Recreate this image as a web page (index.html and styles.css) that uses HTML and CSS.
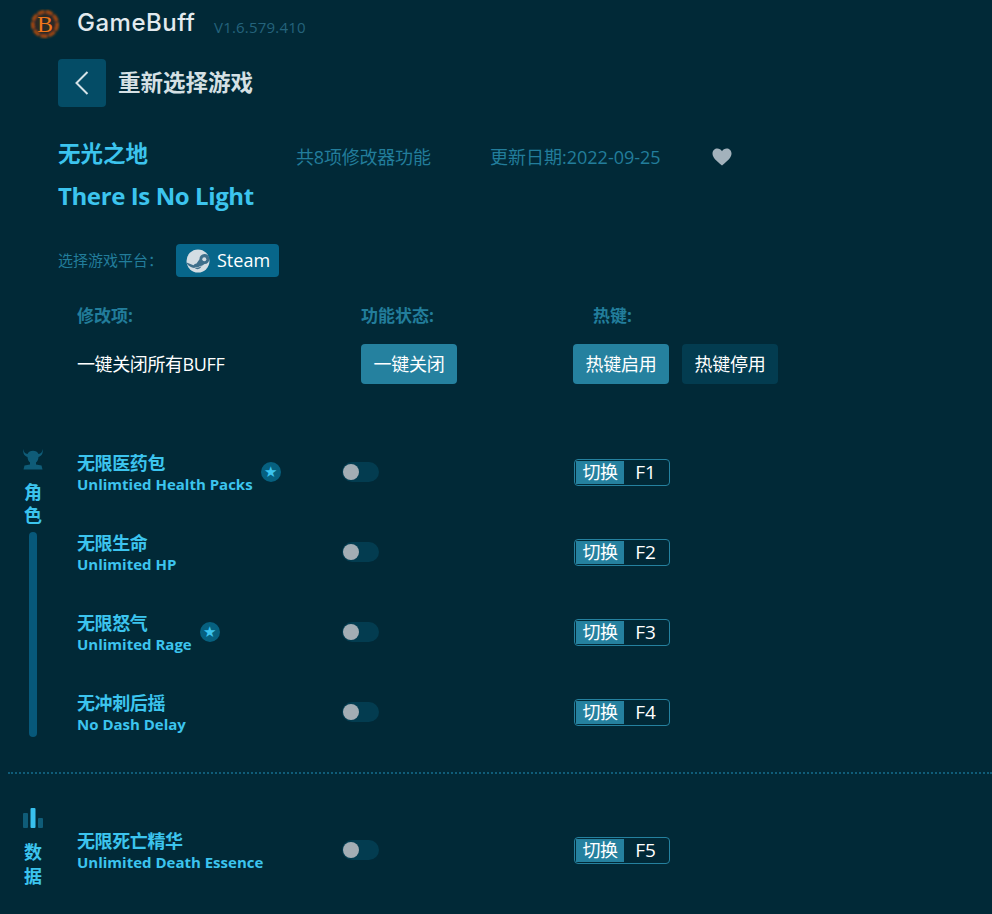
FILE: index.html
```html
<!DOCTYPE html>
<html lang="en">
<head>
    <meta charset="UTF-8">
    <meta name="viewport" content="width=device-width, initial-scale=1.0">
    <title>GameBuff</title>
    <link rel="stylesheet" href="styles.css">
</head>
<body>
    <div class="topbar">
        <svg class="logo" width="30" height="30" viewBox="0 0 30 30">
            <defs><filter id="glow"><feGaussianBlur stdDeviation="0.9"/></filter></defs>
            <circle cx="15" cy="15" r="12.500" fill="#2a2b28" stroke="#a84a10" stroke-width="3" stroke-dasharray="7 1.500" filter="url(#glow)"/>
            <text x="15" y="23" text-anchor="middle" class="logo-letter">B</text>
        </svg>
        <span class="brand">GameBuff</span>
        <span class="version">V1.6.579.410</span>
    </div>

    <div class="back-row">
        <div class="back-btn">
            <svg width="16" height="26" viewBox="0 0 16 26"><path d="M13.5 2 L2.5 13 L13.5 24" fill="none" stroke="#d5e3e8" stroke-width="2"/></svg>
        </div>
        <span class="back-title">重新选择游戏</span>
    </div>

    <div class="game-info">
        <div class="game-head">
            <h1 class="game-cn">无光之地</h1>
            <span class="game-count">共8项修改器功能</span>
            <span class="game-date">更新日期:2022-09-25</span>
            <svg class="heart" width="20" height="18" viewBox="0 0 20 18"><path d="M10 17.5 C4 12.5 .5 9.5 .5 5.5 C.5 2.5 2.8 .5 5.3 .5 C7.2 .5 9 1.5 10 3.2 C11 1.5 12.8 .5 14.7 .5 C17.2 .5 19.5 2.5 19.5 5.5 C19.5 9.5 16 12.5 10 17.5 Z" fill="#a3b2bc"/></svg>
        </div>
        <h2 class="game-en">There Is No Light</h2>
    </div>

    <div class="platform">
        <span class="platform-label">选择游戏平台：</span>
        <div class="steam-btn">
            <svg width="24" height="24" viewBox="0 0 24 24">
                <circle cx="12" cy="12" r="11.5" fill="#d3dde3"/>
                <path d="M1 15 L8 18 A4 4 0 0 0 15.5 16.5 A11.5 11.5 0 0 1 1 15 Z M.6 13.5 L7.5 16.3 A4.2 4.2 0 0 1 10.5 14.4 L13.5 10.2 A5 5 0 1 1 18.6 15 L14 17.9 A11.5 11.5 0 0 1 1 15 Z" fill="#3f6f8b"/>
                <circle cx="18.3" cy="10.2" r="3.6" fill="#3f6f8b"/>
                <circle cx="18.3" cy="10.2" r="2" fill="#d3dde3"/>
            </svg>
            <span>Steam</span>
        </div>
    </div>

    <div class="grid-row heading-row">
        <span>修改项:</span>
        <span class="heading-status">功能状态:</span>
        <span class="heading-hotkey">热键:</span>
    </div>

    <div class="grid-row master-row">
        <span class="master-label">一键关闭所有BUFF</span>
        <div class="heading-status"><button class="btn btn-on">一键关闭</button></div>
        <div class="master-hotkeys">
            <button class="btn btn-on">热键启用</button>
            <button class="btn btn-off">热键停用</button>
        </div>
    </div>

    <section class="group group-role">
        <div class="side">
            <svg width="22" height="22" viewBox="0 0 22 22"><path d="M1.500 0 C1.500 3 3 4.500 5.500 5 C6.500 2.800 8.500 1.800 11 1.800 C13.500 1.800 15.500 2.800 16.500 5 C19 4.500 20.500 3 20.500 0 C21.500 3.500 20 7 16.500 8 C16.300 10.500 15.500 12.500 14 13.500 L14 15.500 L19.500 16.500 L20.500 20.500 L1.500 20.500 L2.500 16.500 L8 15.500 L8 13.500 C6.500 12.500 5.700 10.500 5.500 8 C2 7 .5 3.500 1.500 0 Z" fill="#0f5c78"/></svg>
            <div class="side-text">角<br>色</div>
            <div class="side-bar"></div>
        </div>
        <div class="rows">
            <div class="grid-row cheat">
                <div class="cheat-name">
                    <div>
                        <div class="name-cn">无限医药包</div>
                        <div class="name-en">Unlimtied Health Packs</div>
                    </div>
                    <span class="star">★</span>
                </div>
                <div class="toggle"><i></i></div>
                <div class="hotkey"><span class="hotkey-tag">切换</span><span class="hotkey-key">F1</span></div>
            </div>
            <div class="grid-row cheat">
                <div class="cheat-name">
                    <div>
                        <div class="name-cn">无限生命</div>
                        <div class="name-en">Unlimited HP</div>
                    </div>
                </div>
                <div class="toggle"><i></i></div>
                <div class="hotkey"><span class="hotkey-tag">切换</span><span class="hotkey-key">F2</span></div>
            </div>
            <div class="grid-row cheat">
                <div class="cheat-name">
                    <div>
                        <div class="name-cn">无限怒气</div>
                        <div class="name-en">Unlimited Rage</div>
                    </div>
                    <span class="star">★</span>
                </div>
                <div class="toggle"><i></i></div>
                <div class="hotkey"><span class="hotkey-tag">切换</span><span class="hotkey-key">F3</span></div>
            </div>
            <div class="grid-row cheat">
                <div class="cheat-name">
                    <div>
                        <div class="name-cn">无冲刺后摇</div>
                        <div class="name-en">No Dash Delay</div>
                    </div>
                </div>
                <div class="toggle"><i></i></div>
                <div class="hotkey"><span class="hotkey-tag">切换</span><span class="hotkey-key">F4</span></div>
            </div>
        </div>
    </section>

    <div class="divider"></div>

    <section class="group group-data">
        <div class="side">
            <svg width="22" height="22" viewBox="0 0 22 22">
                <rect x="1" y="6" width="5" height="15" rx="1" fill="#0f5c78"/>
                <rect x="8.500" y="1" width="5" height="20" rx="1" fill="#38c0ee"/>
                <rect x="16" y="11" width="5" height="10" rx="1" fill="#0f5c78"/>
            </svg>
            <div class="side-text">数<br>据</div>
        </div>
        <div class="rows">
            <div class="grid-row cheat">
                <div class="cheat-name">
                    <div>
                        <div class="name-cn">无限死亡精华</div>
                        <div class="name-en">Unlimited Death Essence</div>
                    </div>
                </div>
                <div class="toggle"><i></i></div>
                <div class="hotkey"><span class="hotkey-tag">切换</span><span class="hotkey-key">F5</span></div>
            </div>
        </div>
    </section>
</body>
</html>
```

FILE: styles.css
```css
* {
    box-sizing: border-box;
}
html, body {
    height: 914px;
    overflow: hidden;
}
body {
    margin: 0;
    padding: 0;
    background-color: #012937;
    color: #fff;
    font-family: "Open Sans", "Noto Sans CJK SC", sans-serif;
}
.topbar {
    display: flex;
    align-items: center;
    height: 47px;
    padding-left: 30px;
}
.logo {
    margin-right: 17px;
}
.logo-letter {
    font-family: "Liberation Serif", serif;
    font-size: 24px;
    fill: #f0761a;
}
.brand {
    font-family: "Inter", sans-serif;
    font-size: 24px;
    font-weight: 500;
    letter-spacing: 0.5px;
    color: #e2eaee;
    width: 137px;
    padding-bottom: 2px;
}
.version {
    font-size: 15px;
    letter-spacing: 0.2px;
    color: #24637c;
    margin-top: 6px;
}
.back-row {
    display: flex;
    align-items: center;
    margin: 12px 0 0 58px;
}
.back-btn {
    display: flex;
    align-items: center;
    justify-content: center;
    width: 48px;
    height: 48px;
    background-color: #044c66;
    border-radius: 4px;
    margin-right: 12px;
}
.back-title {
    font-size: 22.5px;
    font-weight: bold;
    color: #d5e0e4;
    padding-bottom: 4px;
}
.game-info {
    margin: 26px 0 0 58px;
}
.game-head {
    display: flex;
    align-items: center;
    height: 42px;
}
.game-cn {
    margin: 0;
    width: 238px;
    font-size: 22.5px;
    line-height: 40px;
    font-weight: bold;
    color: #3cc4ee;
}
.game-count, .game-date {
    font-size: 18px;
    color: #227d9b;
    margin-top: 3px;
}
.game-count {
    width: 194px;
    letter-spacing: -0.2px;
}
.game-date {
    width: 222px;
}
.heart {
    margin-top: 6px;
}
.game-en {
    margin: 0;
    font-size: 24px;
    line-height: 42px;
    font-weight: 700;
    color: #3cc4ee;
    letter-spacing: -0.4px;
}
.platform {
    display: flex;
    align-items: center;
    margin: 27px 0 0 58px;
}
.platform-label {
    width: 118px;
    font-size: 15px;
    color: #227d9b;
    padding-bottom: 3px;
}
.steam-btn {
    display: flex;
    align-items: center;
    gap: 7px;
    width: 103px;
    height: 33px;
    padding-left: 10px;
    background-color: #07668a;
    border-radius: 4px;
    font-size: 18px;
}
.steam-btn span {
    padding-bottom: 2px;
}
.grid-row {
    display: grid;
    grid-template-columns: 265px 232px 1fr;
    align-items: center;
    margin-left: 77px;
}
.heading-row {
    height: 24px;
    margin-top: 25px;
    font-size: 17px;
    font-weight: bold;
    color: #227d9b;
}
.heading-status {
    margin-left: 19px;
}
.heading-hotkey {
    margin-left: 19px;
}
.master-row {
    height: 40px;
    margin-top: 18px;
}
.master-label {
    font-size: 18px;
    letter-spacing: -0.4px;
    padding-bottom: 2px;
}
.master-hotkeys {
    display: flex;
    gap: 13px;
    margin-left: -1px;
}
.btn {
    width: 96px;
    height: 40px;
    padding: 0 0 2px;
    border: none;
    border-radius: 4px;
    color: #fff;
    font-family: inherit;
    font-size: 18px;
    letter-spacing: -0.3px;
}
.btn-on {
    background-color: #25819f;
}
.btn-off {
    background-color: #033c50;
}
.group {
    display: flex;
    padding-left: 8px;
}
.group-role {
    margin-top: 48px;
}
.group-data {
    margin-top: 36px;
}
.side {
    position: relative;
    display: flex;
    flex-direction: column;
    align-items: center;
    width: 50px;
    margin-right: 19px;
    padding-top: 17px;
}
.group-data .side {
    padding-top: 0;
    margin-top: -3px;
}
.side-text {
    margin-top: 10px;
    font-size: 18px;
    line-height: 23px;
    font-weight: bold;
    color: #3cc4ee;
    text-align: center;
}
.group-data .side-text {
    margin-top: 11px;
    line-height: 24px;
}
.side-bar {
    width: 8px;
    height: 205px;
    margin-top: 5px;
    border-radius: 4px;
    background-color: #07587a;
}
.rows {
    flex: 1;
}
.cheat {
    height: 80px;
    margin-left: 0;
}
.cheat-name {
    display: flex;
    align-items: center;
    gap: 8px;
}
.name-cn {
    font-size: 18px;
    line-height: 22px;
    font-weight: bold;
    color: #3cc4ee;
    letter-spacing: -0.4px;
    padding-top: 2px;
}
.name-en {
    font-size: 15px;
    line-height: 20px;
    font-weight: 700;
    color: #3cc4ee;
}
.star {
    display: flex;
    align-items: center;
    justify-content: center;
    width: 20px;
    height: 20px;
    border-radius: 50%;
    background-color: #06607f;
    color: #3cc4ee;
    font-family: "DejaVu Sans", sans-serif;
    font-size: 15px;
}
.toggle {
    display: flex;
    align-items: center;
    width: 37px;
    height: 20px;
    border-radius: 10px;
    background-color: #033c50;
    padding-left: 1px;
}
.toggle i {
    display: block;
    width: 16px;
    height: 16px;
    border-radius: 50%;
    background-color: #a3adb4;
}
.hotkey {
    display: flex;
    align-items: stretch;
    width: 96px;
    height: 27px;
    border: 1px solid #25819f;
    border-radius: 4px;
    padding: 1px 0 1px 1px;
    font-size: 18px;
    line-height: 23px;
}
.hotkey-tag {
    width: 48px;
    background-color: #25819f;
    text-align: center;
    letter-spacing: -0.6px;
}
.hotkey-key {
    flex: 1;
    text-align: center;
    font-size: 19px;
    margin-right: 2px;
}
.divider {
    margin: 20px 0 0 8px;
    border-top: 2px dotted #0f5c78;
}
```
